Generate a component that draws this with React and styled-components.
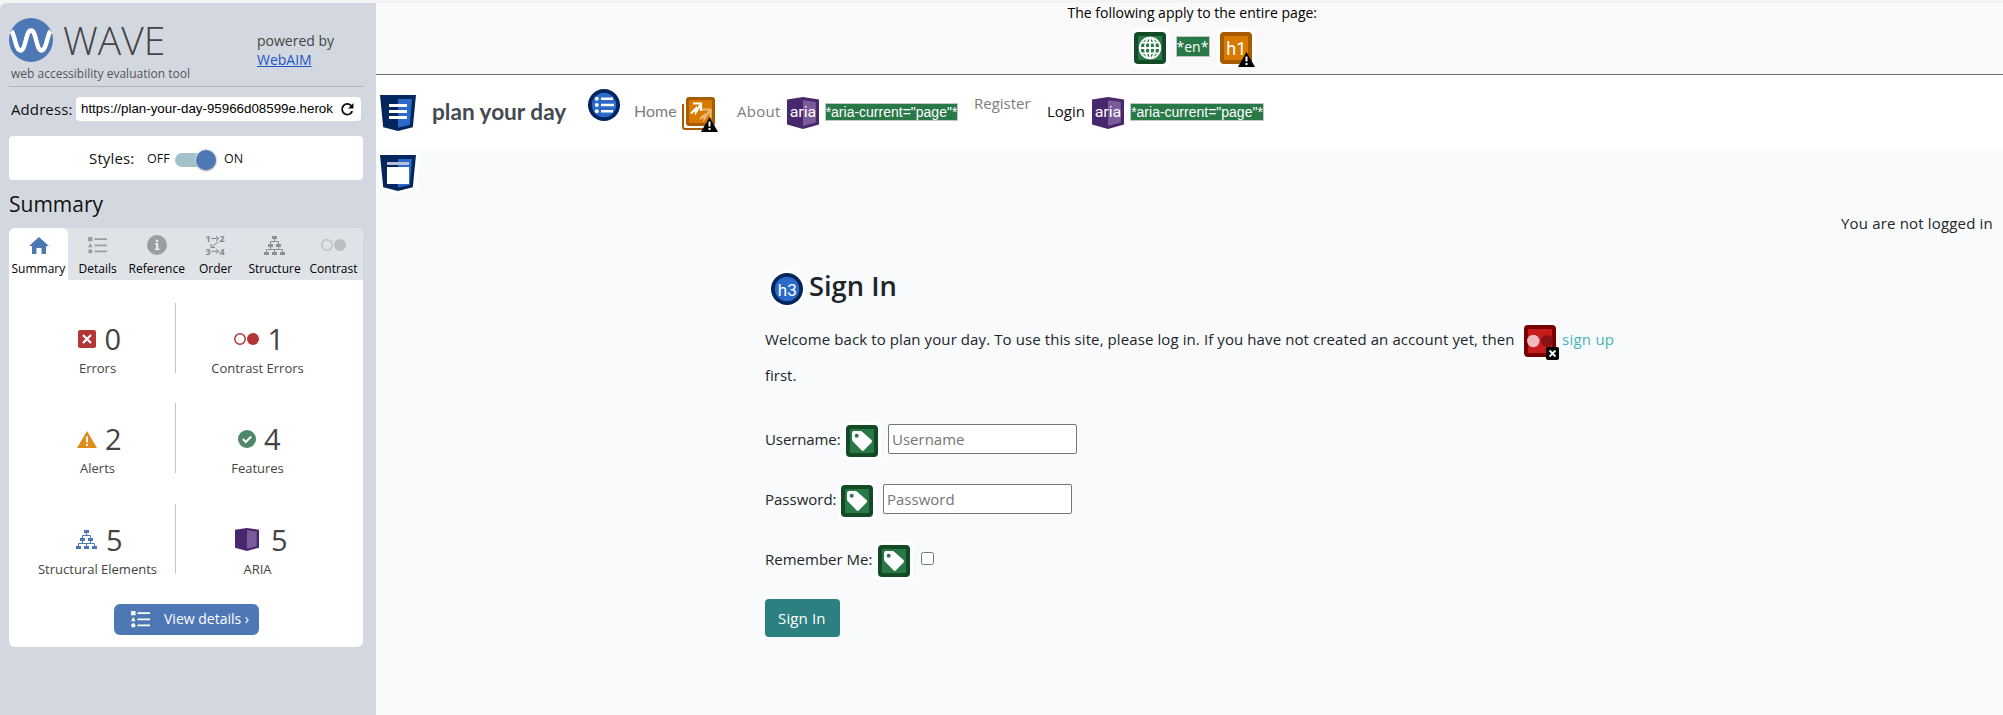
import React from "react";
import styled, { createGlobalStyle } from "styled-components";

const Global = createGlobalStyle`
  * { box-sizing: border-box; }
  body { margin: 0; background: #f3f3f4; font-family: "Open Sans", "Noto Sans", sans-serif; overflow: hidden; }
  svg { display: block; flex: none; overflow: visible; }
`;

const Text = styled.span`
  display: block;
  flex: none;
  white-space: nowrap;
  width: ${(p) => (p.$w ? p.$w + "px" : "auto")};
  margin-left: ${(p) => p.$ml || 0}px;
  margin-top: ${(p) => p.$mt || 0}px;
  font-size: ${(p) => p.$size || 15}px;
  line-height: ${(p) => p.$lh || 20}px;
  letter-spacing: ${(p) => p.$ls || 0}px;
  color: ${(p) => p.$color || "#212529"};
  text-align: ${(p) => p.$align || "left"};
`;
const Slot = styled.div`
  flex: none;
  margin-left: ${(p) => p.$ml || 0}px;
  margin-top: ${(p) => p.$mt || 0}px;
`;

const Page = styled.div`
  display: flex;
  height: 715px;
  padding-top: 3px;
`;

/* Sidebar */
const Sidebar = styled.aside`
  flex: none;
  width: 376px;
  height: 712px;
  padding: 0 13px 0 9px;
  background: #d3d8e0;
  border-top-left-radius: 6px;
`;
const Masthead = styled.header`
  display: flex;
  height: 84px;
  padding-top: 15px;
  border-bottom: 1px solid #b0b4b7;
`;
const Brand = styled.div`
  width: 248px;
  flex: none;
`;
const BrandRow = styled.div`
  display: flex;
  height: 44px;
`;
const Wordmark = styled(Text)`
  font-weight: 300;
`;
const WebLink = styled(Text)`
  text-decoration: underline;
`;
const AddressRow = styled.div`
  display: flex;
  margin-top: 10px;
  height: 24px;
`;
const AddressBox = styled.div`
  display: flex;
  align-items: center;
  width: 285px;
  height: 24px;
  background: #fff;
  border-radius: 4px;
  font-family: "Liberation Sans", Arial, sans-serif;
`;
const StylesBox = styled.div`
  display: flex;
  height: 44px;
  margin-top: 15px;
  background: #fff;
  border-radius: 4px;
`;
const Track = styled.div`
  display: flex;
  align-items: center;
  justify-content: flex-end;
  width: 41px;
  height: 14px;
  border-radius: 7px;
  background: #a3c1cb;
  margin: 17px 0 0 4px;
`;
const Knob = styled.div`
  width: 20px;
  height: 20px;
  flex: none;
  border-radius: 50%;
  background: #4d78b5;
  box-shadow: 0 1px 2px rgba(0, 0, 0, 0.35), 0 0 0 1px #e3ebf2;
`;
const Panel = styled.section`
  height: 419px;
  background: #fff;
  border-radius: 6px;
`;
const Tabs = styled.nav`
  display: flex;
  height: 52px;
  background: #dfe3e8;
  border-radius: 6px 6px 0 0;
`;
const Tab = styled.div`
  width: 59px;
  height: 52px;
  padding-top: 7px;
  display: flex;
  flex-direction: column;
  align-items: center;
  border-radius: 6px 6px 0 0;
  background: ${(p) => (p.$active ? "#fff" : "transparent")};
`;
const TabIcon = styled.div`
  display: flex;
  align-items: center;
  justify-content: center;
  height: 20px;
  margin-bottom: 6px;
`;
const Stats = styled.div`
  padding-top: 23px;
  display: flex;
  flex-direction: column;
  gap: 30.300px;
`;
const StatRow = styled.div`
  display: flex;
  height: 70px;
`;
const Stat = styled.div`
  width: ${(p) => (p.$left ? 155 : 163)}px;
  margin-left: ${(p) => (p.$left ? 11 : 0)}px;
  padding-top: 16px;
`;
const Divider = styled.div`
  width: 1px;
  background: #c4c4c4;
`;
const StatTop = styled.div`
  display: flex;
  align-items: center;
  height: 40px;
  padding-left: ${(p) => p.$pad}px;
`;
const DetailsButton = styled.button`
  display: flex;
  align-items: center;
  width: 145px;
  height: 31px;
  margin: 30px 0 0 105px;
  padding: 0 0 0 17px;
  border: 0;
  border-radius: 6px;
  background: #4d78b5;
  font-family: inherit;
`;

/* Page */
const Main = styled.main`
  flex: 1;
  height: 712px;
  background: #f9fafc;
`;
const PageWide = styled.div`
  display: flex;
  flex-direction: column;
  align-items: center;
  height: 72px;
  padding-left: 6px;
  background: #f9f9f9;
  border-bottom: 1px solid #6b7166;
`;
const IconRow = styled.div`
  display: flex;
  gap: 10px;
  margin-top: 10px;
`;
const Tag = styled.div`
  display: flex;
  justify-content: center;
  align-items: center;
  flex: none;
  width: ${(p) => p.$w}px;
  height: ${(p) => p.$h}px;
  margin-top: ${(p) => p.$mt}px;
  margin-left: ${(p) => p.$ml || 0}px;
  background: #287848;
  border: 1px solid #c2c6c3;
  font-family: ${(p) => (p.$arial ? '"Liberation Sans", Arial, sans-serif' : "inherit")};
`;
const NavBar = styled.nav`
  display: flex;
  align-items: flex-start;
  height: 76px;
  background: #fff;
`;
const SiteName = styled(Text)`
  font-family: Lato, sans-serif;
  font-weight: 700;
`;
const HomeLink = styled(Text)`
  font-family: Lato, sans-serif;
`;
const StatusLine = styled.div`
  display: flex;
  justify-content: flex-end;
  padding: 20px 10px 0 0;
`;
const Content = styled.div`
  margin: 32px 0 0 389px;
`;
const Heading = styled.h3`
  display: flex;
  margin: 0;
  height: 38px;
  font-weight: 600;
`;
const Line = styled.div`
  display: flex;
  align-items: flex-start;
  height: ${(p) => p.$h}px;
  margin-top: ${(p) => p.$mt || 0}px;
`;
const Field = styled.input`
  width: 189px;
  height: 30px;
  margin: 0 0 0 10px;
  padding: 0 3px;
  border: 1px solid #767676;
  border-radius: 2px;
  background: #fff;
  font: 15px/24px "Open Sans", sans-serif;
  &::placeholder { color: #757575; opacity: 1; }
`;
const Check = styled.span`
  width: 13px;
  height: 13px;
  margin: 8px 0 0 11px;
  border: 1px solid #767676;
  border-radius: 2.5px;
  background: #fff;
`;
const SignInButton = styled.button`
  display: block;
  width: 75px;
  height: 38px;
  padding: 0 0 0 13px;
  border: 0;
  border-radius: 4px;
  background: #2c8080;
  font-family: inherit;
`;

/* Drawings */
const WaveLogo = () => (
  <svg width="44" height="44" viewBox="0 0 44 44">
    <circle cx="22" cy="22" r="22" fill="#4d78b5" />
    <path d="M2.500 13C6 17 6.500 32.500 11.500 32.500C17 32.500 16.500 12.500 22 12.500C27.500 12.500 27 32.500 32.500 32.500C37.500 32.500 38 17 41.500 13" fill="none" stroke="#fff" strokeWidth="4.400" />
  </svg>
);
const Refresh = () => (
  <svg width="13" height="13" viewBox="0 0 13 13">
    <path d="M10.600 3A5.300 5.300 0 1 0 11.300 8.200" fill="none" stroke="#111" strokeWidth="1.800" />
    <path d="M12.500 0V5.600H7Z" fill="#111" />
  </svg>
);
const Home = () => (
  <svg width="20" height="17" viewBox="0 0 20 17">
    <path d="M10 0L20 9H17V17H12.500V11H7.500V17H3V9H0Z" fill="#4d78b5" />
  </svg>
);
const List = ({ c }) => (
  <svg width="19" height="17" viewBox="0 0 19 17" fill={c}>
    <path d="M0 0H4.500V4.200H0ZM2.300 6L4.500 10.300H0ZM6.500 1.200H19V3H6.500ZM6.500 7.500H19V9.300H6.500ZM6.500 13.500H19V15.300H6.500Z" />
    <circle cx="2.300" cy="14.400" r="2.100" />
  </svg>
);
const Info = () => (
  <svg width="20" height="20" viewBox="0 0 20 20">
    <circle cx="10" cy="10" r="10" fill="#9b9ea1" />
    <path d="M8 8H11.300V13.500H12.500V15H8V13.500H9V9.500H8ZM8.800 4.800H11.300V7H8.800Z" fill="#e8ebee" />
  </svg>
);
const Order = () => (
  <svg width="19" height="20" viewBox="0 0 19 20" fontFamily="Open Sans" fontSize="9" fontWeight="700" fill="#85888b">
    <text x="-0.500" y="6.500">1</text><text x="13.500" y="6.500">2</text>
    <text x="-0.500" y="19.500">3</text><text x="13.500" y="19.500">4</text>
    <path d="M5 3.500H12.500M10 1L12.500 3.500L10 6M5 16.300H12.500M10 13.800L12.500 16.300L10 18.800M12.500 6.500L5 12.500M5 9V12.500H9" fill="none" stroke="#85888b" strokeWidth="1" />
  </svg>
);
const Tree = ({ c }) => (
  <svg width="21" height="19" viewBox="0 0 21 19" fill={c}>
    <path d="M8 0H13V3H8ZM4 8H9V11H4ZM12 8H17V11H12ZM0 16H5V19H0ZM8 16H13V19H8ZM16 16H21V19H16Z" />
    <path d="M10.500 3V5.500M6.500 8V5.500H14.500V8M6.500 11V13.500M14.500 11V13.500M2.500 16V13.500H18.500V16M10.500 13.500V16" fill="none" stroke={c} />
  </svg>
);
const Circles = ({ c }) => (
  <svg width="25" height="12" viewBox="0 0 25 12">
    <circle cx="6" cy="6" r="5.200" fill="none" stroke={c} strokeWidth="1.500" />
    <circle cx="19" cy="6" r="6" fill={c} />
  </svg>
);
const ErrorIcon = () => (
  <svg width="18" height="18" viewBox="0 0 18 18">
    <rect width="18" height="18" rx="2" fill="#b43637" />
    <path d="M5 5L13 13M13 5L5 13" stroke="#fff" strokeWidth="2.200" />
  </svg>
);
const AlertIcon = () => (
  <svg width="20" height="17" viewBox="0 0 20 17">
    <path d="M10 0L20 17H0Z" fill="#e08c1c" />
    <path d="M9 5.500H11V11.500H9ZM9 13H11V15H9Z" fill="#fff" />
  </svg>
);
const FeatureIcon = () => (
  <svg width="18" height="18" viewBox="0 0 18 18">
    <circle cx="9" cy="9" r="9" fill="#4f8768" />
    <path d="M4.800 9L7.800 12L13.200 6.500" fill="none" stroke="#fff" strokeWidth="2" />
  </svg>
);
const AriaIcon = ({ w, h, label }) => (
  <svg width={w} height={h} viewBox="0 0 30 32" preserveAspectRatio="none">
    <path d="M0 2.500L15 0L30 2.500V27.500L15 32L0 27.500Z" fill="#48286c" />
    <path d="M15 3.200L27 5V25.500L15 29Z" fill="#7c5b9b" />
    {label && <text x="15" y="20" textAnchor="middle" fontFamily="Roboto" fontSize="15" fill="#fff" textLength="25">aria</text>}
  </svg>
);
const Halo = ({ r }) => <rect x="-3" y="-3" width="38" height="38" rx={r} fill="#fff" />;
const Warn = ({ x, y }) => (
  <g transform={`translate(${x} ${y})`}>
    <path d="M8.500 0L17 15H0Z" fill="#000" />
    <path d="M7.500 4.500H9.500V9.500H7.500ZM7.500 11H9.500V13H7.500Z" fill="#fff" />
  </g>
);
const Globe = () => (
  <svg width="32" height="32" viewBox="0 0 32 32">
    <Halo r="5" />
    <rect width="32" height="32" rx="4" fill="#124b26" /><rect x="4" y="4" width="24" height="24" fill="#287848" />
    <g fill="none" stroke="#fff" strokeWidth="1.800">
      <circle cx="16" cy="16" r="10.300" /><ellipse cx="16" cy="16" rx="5" ry="10.300" />
      <path d="M16 5.500V26.500M5.500 16H26.500M7.500 10.700H24.500M7.500 21.300H24.500" />
    </g>
  </svg>
);
const H1Icon = () => (
  <svg width="32" height="32" viewBox="0 0 32 32">
    <Halo r="5" />
    <rect width="32" height="32" rx="4" fill="#a85c00" /><rect x="4" y="4" width="24" height="24" fill="#d87900" />
    <text x="16.300" y="22.500" textAnchor="middle" fontFamily="Roboto" fontSize="18" fill="#fff">h1</text>
    <Warn x={18} y={20} />
  </svg>
);
const Shield = ({ children, halo }) => (
  <svg width="36" height="36" viewBox="0 0 36 36">
    {halo && <path d="M-3 -3H39L36.500 33.500L18 39L-.5 33.500Z" fill="#fff" />}
    <path d="M0 0H36L32.800 32.300L18 36L3.200 32.300Z" fill="#03265c" />
    <path d="M18 4H32L29.800 30L18 32.500Z" fill="#2b6acb" />
    {children}
  </svg>
);
const NavCircle = () => (
  <svg width="32" height="32" viewBox="0 0 32 32">
    <circle cx="16" cy="16" r="16" fill="#03265c" /><circle cx="16" cy="16" r="12.200" fill="#2b6acb" />
    <g fill="#fff"><circle cx="8.800" cy="9.800" r="2" /><circle cx="8.800" cy="16" r="2" /><circle cx="8.800" cy="22.200" r="2" />
      <path d="M13 8.600H25V11H13ZM13 14.800H26V17.200H13ZM13 21H25V23.400H13Z" /></g>
  </svg>
);
const H3Icon = () => (
  <svg width="32" height="32" viewBox="0 0 32 32">
    <circle cx="16" cy="16" r="19" fill="#fff" />
    <circle cx="16" cy="16" r="16" fill="#03265c" /><circle cx="16" cy="16" r="12.200" fill="#2b6acb" />
    <text x="16.300" y="22.500" textAnchor="middle" fontFamily="Roboto" fontSize="17" fontWeight="400" fill="#fff">h3</text>
  </svg>
);
const LinkIcon = () => (
  <svg width="36" height="35" viewBox="0 0 36 35">
    <path d="M2 8H1V30Q1 32 3 32H22" fill="none" stroke="#a85c00" strokeWidth="2" />
    <rect x="4" y="0" width="29" height="29" rx="3" fill="#a85c00" /><rect x="7" y="3" width="23" height="23" fill="#d87900" />
    <g fill="none" strokeWidth="2.200">
      <path d="M18 22L22.500 18V21.500L28 13M19.500 12.500H28.500V21" stroke="#eab878" />
      <path d="M9 16.500L14 11.500V15L19 7M11 6.500H19V14" stroke="#fff" />
    </g>
    <Warn x={19} y={20} />
  </svg>
);
const ContrastIcon = () => (
  <svg width="32" height="32" viewBox="0 0 32 32">
    <Halo r="5" />
    <rect width="32" height="32" rx="4" fill="#780000" /><rect x="4" y="4" width="24" height="24" fill="#c71b1d" />
    <circle cx="9.300" cy="16" r="6.200" fill="#efbcbd" /><circle cx="23" cy="16" r="6" fill="#8b1214" />
    <rect x="22" y="22" width="13" height="13" rx="2" fill="#000" />
    <path d="M25.500 25.500L31.500 31.500M31.500 25.500L25.500 31.500" stroke="#fff" strokeWidth="1.800" />
  </svg>
);
const LabelIcon = () => (
  <svg width="32" height="32" viewBox="0 0 32 32">
    <Halo r="5" />
    <rect width="32" height="32" rx="4" fill="#124b26" /><rect x="4" y="4" width="24" height="24" fill="#287848" />
    <path d="M8 6H14Q15.500 6 16.500 7L25.500 15Q26.700 16.200 25.500 17.500L18 25.300Q16.700 26.500 15.500 25.300L7 16.500Q6 15.500 6 14V8Q6 6 8 6Z" fill="#fff" />
    <circle cx="10.700" cy="10.700" r="2" fill="#287848" />
  </svg>
);

const stats = [
  [["Errors", "0", <ErrorIcon />, 58, 8.5], ["Contrast Errors", "1", <Circles c="#b43637" />, 58, 8.5]],
  [["Alerts", "2", <AlertIcon />, 57, 8], ["Features", "4", <FeatureIcon />, 62, 8]],
  [["Structural Elements", "5", <Tree c="#4d78b5" />, 56, 9], ["ARIA", "5", <AriaIcon w={24} h={23} />, 59, 12]],
];
const tabs = [
  ["Summary", <Home />, 54], ["Details", <List c="#9b9ea1" />, 38], ["Reference", <Info />, 56],
  ["Order", <Order />, 33], ["Structure", <Tree c="#8d9093" />, 52], ["Contrast", <Circles c="#bcbfc3" />, 48],
];

export default function App() {
  return (
    <Page>
      <Global />
      <Sidebar>
        <Masthead>
          <Brand>
            <BrandRow><WaveLogo /><Wordmark $ml={10} $size={39} $lh={44} $w={104} $color="#444">WAVE</Wordmark></BrandRow>
            <Text $ml={2} $mt={4} $size={12} $lh={16} $w={180} $color="#555">web accessibility evaluation tool</Text>
          </Brand>
          <div>
            <Text $mt={13} $size={14} $lh={19} $w={79} $color="#444">powered by</Text>
            <WebLink $size={14} $lh={19} $w={55} $color="#1a56c4">WebAIM</WebLink>
          </div>
        </Masthead>
        <AddressRow>
          <Text $ml={2} $w={65} $lh={24} $ls={0.1} $color="#111">Address:</Text>
          <AddressBox><Text $ml={5} $w={252} $size={13.333} $lh={24} $color="#000">https://plan-your-day-95966d08599e.herok</Text><Slot $ml={8}><Refresh /></Slot></AddressBox>
        </AddressRow>
        <StylesBox>
          <Text $ml={80} $w={46} $lh={44} $ls={0.15} $color="#111">Styles:</Text>
          <Text $ml={12} $w={24} $size={12.5} $lh={45} $color="#111">OFF</Text>
          <Track><Knob /></Track>
          <Text $ml={8} $w={22} $size={12.5} $lh={45} $color="#111">ON</Text>
        </StylesBox>
        <Text $size={21} $lh={48} $w={96} $color="#111">Summary</Text>
        <Panel>
          <Tabs>
            {tabs.map(([t, icon, w], i) => (
              <Tab key={t} $active={i === 0}><TabIcon>{icon}</TabIcon><Text $size={12} $lh={16} $w={w} $color="#000">{t}</Text></Tab>
            ))}
          </Tabs>
          <Stats>
            {stats.map((row, i) => (
              <StatRow key={i}>
                {row.map(([label, n, icon, pad, gap], j) => (
                  <React.Fragment key={label}>
                    {j === 1 && <Divider />}
                    <Stat $left={j === 0}>
                      <StatTop $pad={pad}>{icon}<Text $ml={gap} $size={29} $lh={40} $color="#444">{n}</Text></StatTop>
                      <Text $size={13} $lh={18} $align="center" $color="#444">{label}</Text>
                    </Stat>
                  </React.Fragment>
                ))}
              </StatRow>
            ))}
          </Stats>
          <DetailsButton><List c="#fff" /><Text $ml={14} $size={14} $w={86} $color="#fff">View details ›</Text></DetailsButton>
        </Panel>
      </Sidebar>
      <Main>
        <PageWide>
          <Text $size={14} $lh={19} $w={250} $color="#000">The following apply to the entire page:</Text>
          <IconRow><Globe /><Tag $w={34} $h={21} $mt={4}><Text $size={14} $lh={18} $w={32} $color="#fff">*en*</Text></Tag><H1Icon /></IconRow>
        </PageWide>
        <NavBar>
          <Slot $ml={4} $mt={20}><Shield><path d="M9 9H27V12H9ZM9 15H27V18H9ZM9 21H27V24H9Z" fill="#fff" /></Shield></Slot>
          <SiteName $ml={16} $mt={22} $size={22.6} $lh={30} $w={135} $color="#444a4f">plan your day</SiteName>
          <Slot $ml={21} $mt={14}><NavCircle /></Slot>
          <HomeLink $ml={14} $mt={26} $size={16} $w={44} $color="#7c7c7c">Home</HomeLink>
          <Slot $ml={4} $mt={22}><LinkIcon /></Slot>
          <Text $ml={19} $mt={26} $w={44} $ls={0.3} $color="#7c7c7c">About</Text>
          <Slot $ml={6} $mt={22}><AriaIcon w={32} h={32} label /></Slot>
          <Tag $w={133} $h={18} $mt={28} $ml={6} $arial><Text $size={14} $lh={16} $color="#fff">*aria-current="page"*</Text></Tag>
          <Text $ml={16} $mt={18} $w={57} $color="#7c7c7c">Register</Text>
          <Text $ml={16} $mt={26} $w={39} $color="#111">Login</Text>
          <Slot $ml={6} $mt={22}><AriaIcon w={32} h={32} label /></Slot>
          <Tag $w={134} $h={18} $mt={28} $ml={6} $arial><Text $size={14} $lh={16} $color="#fff">*aria-current="page"*</Text></Tag>
        </NavBar>
        <Line $h={40}>
          <Slot $ml={4} $mt={4}><Shield halo><path d="M7 7H29V10H7Z" fill="#b5c2da" /><path d="M7 12H29V29H7Z" fill="#fff" /></Shield></Slot>
        </Line>
        <StatusLine><Text $lh={24} $w={152} $ls={0.17}>You are not logged in</Text></StatusLine>
        <Content>
          <Heading><Slot $ml={6} $mt={6}><H3Icon /></Slot><Text $ml={6} $mt={1} $size={27.3} $lh={36} $w={90}>Sign In</Text></Heading>
          <Line $h={36} $mt={16}>
            <Text $lh={36} $w={749} $ls={0.095}>Welcome back to plan your day. To use this site, please log in. If you have not created an account yet, then</Text>
            <Slot $ml={10} $mt={4}><ContrastIcon /></Slot>
            <Text $ml={6} $lh={36} $w={53} $ls={0.25} $color="#45b5b3">sign up</Text>
          </Line>
          <Line $h={36}><Text $lh={36} $w={30}>first.</Text></Line>
          <Line $h={60} $mt={31}><Text $lh={30} $w={75} $ls={-0.1}>Username:</Text><Slot $ml={6} $mt={1}><LabelIcon /></Slot><Field placeholder="Username" /></Line>
          <Line $h={60}><Text $lh={30} $w={70}>Password:</Text><Slot $ml={6} $mt={1}><LabelIcon /></Slot><Field placeholder="Password" /></Line>
          <Line $h={55}><Text $lh={30} $w={108}>Remember Me:</Text><Slot $ml={5} $mt={1}><LabelIcon /></Slot><Check /></Line>
          <SignInButton><Text $lh={38} $w={50} $ls={0.15} $color="#fff">Sign In</Text></SignInButton>
        </Content>
      </Main>
    </Page>
  );
}
